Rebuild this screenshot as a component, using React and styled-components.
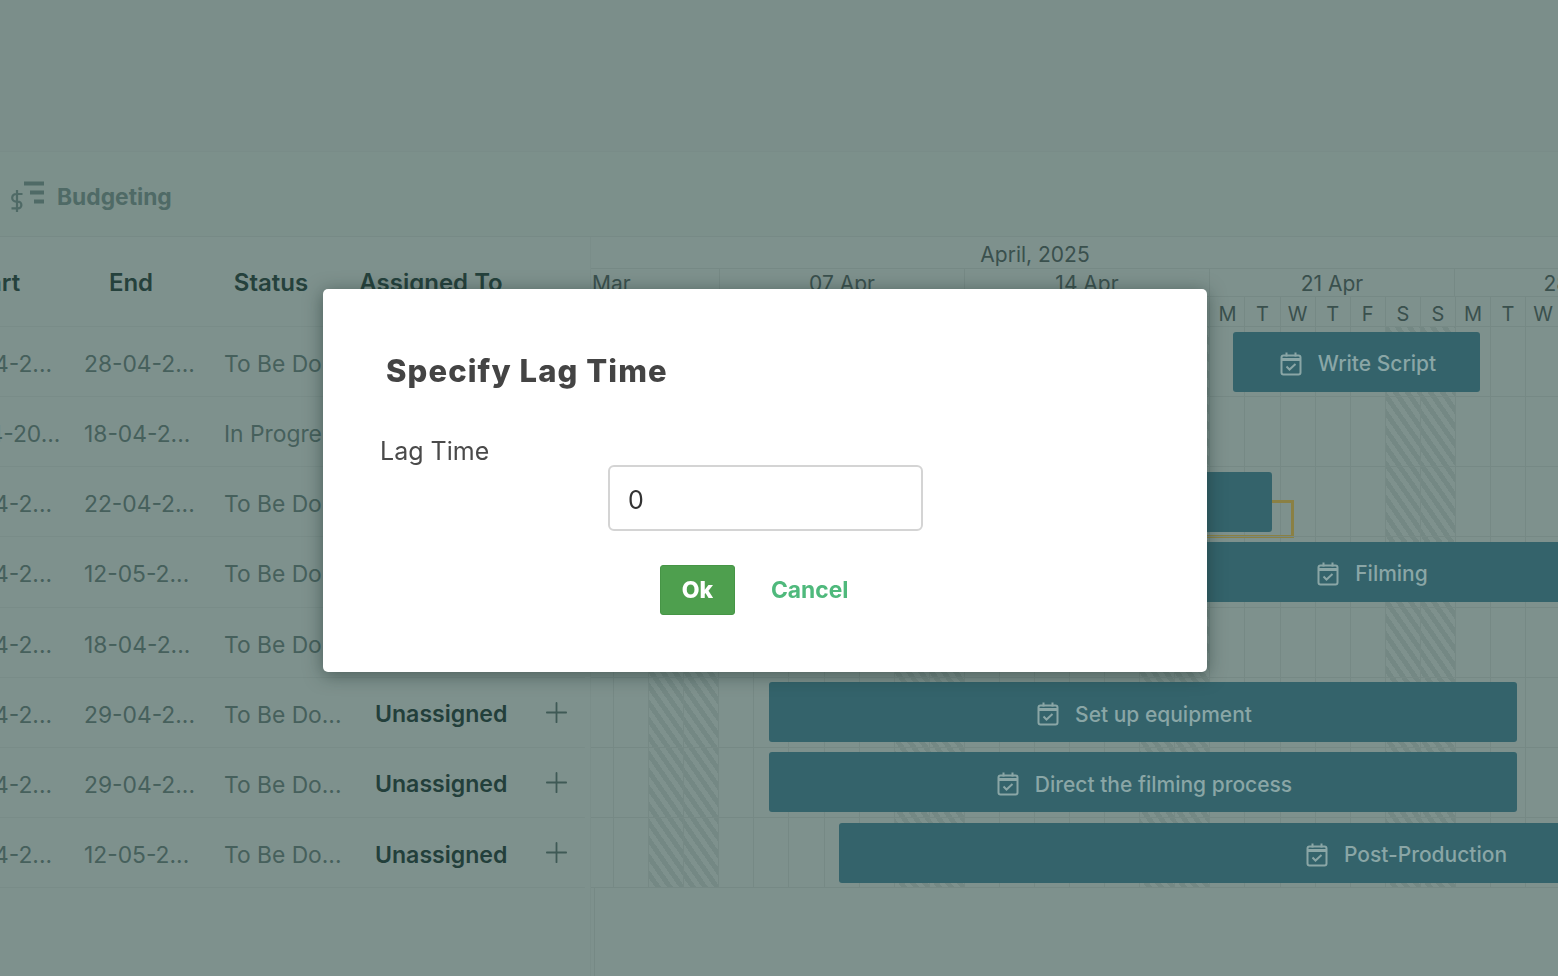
import styled, { createGlobalStyle } from "styled-components";
import { Plus } from "lucide-react";

const GlobalStyle = createGlobalStyle`
  html, body {
    margin: 0;
    padding: 0;
    height: 100%;
    overflow: hidden;
    background: #7e918d;
  }
  * { box-sizing: border-box; }
  body { font-family: Inter, "Liberation Sans", sans-serif; }
`;

const Page = styled.div`
  width: 1558px;
  height: 976px;
  overflow: hidden;
  color: #46605c;
  background: #7e918d;
`;

const TopBand = styled.div`
  height: 152px;
  background: #7b8e8a;
  border-bottom: 1px solid #798c88;
`;

const Toolbar = styled.div`
  height: 85px;
  padding: 5px 0 0 10px;
  display: flex;
  align-items: center;
  gap: 13px;
  color: #4f6a66;
  font-size: 22.8px;
  font-weight: 700;
  background: #7c908b;
  border-bottom: 1px solid #778a86;
`;

const Workspace = styled.div`
  display: flex;
  height: 739px;
`;

/* ---- table ---- */

const TablePanel = styled.div`
  width: 590px;
  flex: none;
  overflow: hidden;
`;

const TableRow = styled.div`
  height: ${(p) => p.$height}px;
  width: 659px;
  margin-left: -74px;
  display: grid;
  grid-template-columns: 144px 140px 140px 180px 52px;
  align-items: center;
  border-bottom: 1px solid #798c88;
`;

const HeadCell = styled.div`
  padding-right: ${(p) => p.$pad ?? 18}px;
  padding-top: 2px;
  text-align: center;
  font-size: 24px;
  font-weight: 600;
  color: #25413c;
  white-space: nowrap;
`;

const Cell = styled.div`
  padding-left: ${(p) => p.$pad ?? 14}px;
  padding-top: 4px;
  font-size: 22.8px;
  white-space: nowrap;
  overflow: hidden;
`;

const Assignee = styled(Cell)`
  padding-left: 25px;
  font-size: 23.1px;
  font-weight: 600;
  color: #233f3b;
`;

const AddCell = styled.div`
  display: flex;
  justify-content: center;
  color: #3f5a56;
`;

/* ---- gantt ---- */

const GanttPanel = styled.div`
  flex: 1;
  min-width: 0;
  display: flex;
  flex-direction: column;
  overflow: hidden;
  border-left: 1px solid #7a8d89;
`;

const HeaderRow = styled.div`
  display: flex;
  flex: none;
  height: ${(p) => p.$height}px;
  color: #3a504d;
  font-size: 21px;
  border-bottom: 1px solid #768985;
  margin-left: ${(p) => p.$offset ?? 0}px;
`;

const MonthCell = styled.div`
  width: 888px;
  display: flex;
  align-items: flex-end;
  justify-content: center;
  padding-bottom: 1px;
`;

const WeekCell = styled.div`
  width: ${(p) => p.$width}px;
  flex: none;
  display: flex;
  align-items: center;
  justify-content: ${(p) => (p.$left ? "flex-start" : "center")};
  padding-top: 2px;
  padding-left: ${(p) => (p.$left ? "1px" : "0")};
  border-right: 1px solid #768985;
  white-space: nowrap;
`;

const DayCell = styled.div`
  width: 35.09px;
  flex: none;
  display: flex;
  align-items: center;
  justify-content: center;
  font-size: 20px;
  padding-top: 4px;
  border-left: 1px solid #768985;
`;

const GanttBody = styled.div`
  position: relative;
  flex: none;
  height: 561px;
  border-bottom: 1px solid #768985;
`;

const EmptyArea = styled.div`
  flex: 1;
  margin-left: 3px;
  border-left: 1px solid #768985;
`;

const DayColumns = styled.div`
  display: flex;
  height: 100%;
  margin-left: -13px;
`;

const DayColumn = styled.div`
  width: 35.09px;
  flex: none;
  border-left: 1px solid #768985;
  background: ${(p) =>
    p.$weekend
      ? "repeating-linear-gradient(55deg, #7e918d 0 4.9px, #748884 4.9px 9.8px)"
      : "none"};
`;

const BarLayer = styled.div`
  position: absolute;
  inset: 0;
  z-index: 0;
`;

const BarRow = styled.div`
  height: 70.15px;
  display: flex;
  align-items: center;
  border-bottom: 1px solid #768985;
`;

const Bar = styled.div`
  position: relative;
  flex: none;
  height: 60px;
  margin-left: ${(p) => p.$x - 591}px;
  width: ${(p) => p.$w}px;
  display: flex;
  align-items: center;
  justify-content: center;
  gap: 16px;
  padding-left: 3px;
  padding-top: 4px;
  background: #34636b;
  border-radius: 3px;
  color: #8aa6a6;
  font-size: 21px;
  font-weight: 500;
  white-space: nowrap;
`;

const Baseline = styled.div`
  position: absolute;
  right: -22px;
  bottom: -6px;
  width: 200px;
  height: 38px;
  border: 3px solid #8a8044;
  z-index: -1;
`;

/* ---- modal ---- */

const Overlay = styled.div`
  position: fixed;
  inset: 0;
  z-index: 10;
  padding: 289px 0 0 323px;
`;

const Modal = styled.div`
  width: 884px;
  height: 383px;
  padding-top: 62px;
  background: #fff;
  border-radius: 5px;
  box-shadow: 0 3px 18px rgba(20, 40, 36, 0.5);
  color: #444;
`;

const Title = styled.h2`
  margin: 0 0 45px 63px;
  font-size: 31px;
  line-height: 40px;
  font-weight: 800;
  letter-spacing: 1.1px;
  color: #444;
`;

const Field = styled.div`
  display: grid;
  grid-template-columns: 228px 315px;
  grid-template-rows: 29px 66px;
  margin-left: 57px;
`;

const Label = styled.label`
  grid-column: 1;
  grid-row: 1;
  font-size: 25px;
  line-height: 30px;
  white-space: nowrap;
  color: #4a4a4a;
`;

const Input = styled.input`
  grid-column: 2;
  grid-row: 2;
  width: 100%;
  height: 66px;
  padding: 3px 18px 0;
  border: 2px solid #d4d4d4;
  border-radius: 6px;
  font-family: inherit;
  font-size: 25px;
  color: #333;
  outline: none;
`;

const Actions = styled.div`
  margin-top: 34px;
  padding-left: 337px;
  display: flex;
  gap: 14px;
`;

const OkButton = styled.button`
  width: 75px;
  height: 50px;
  background: #4e9f4e;
  border: 1px solid #469546;
  border-radius: 3px;
  color: #fff;
  font-family: inherit;
  font-size: 23px;
  font-weight: 800;
`;

const CancelButton = styled.button`
  height: 50px;
  padding: 0 22px 2px;
  background: none;
  border: none;
  color: #4fb97c;
  font-family: inherit;
  font-size: 22.8px;
  font-weight: 700;
`;

function BudgetIcon() {
  return (
    <svg width="34" height="32" viewBox="0 0 34 32" fill="none" stroke="#4f6a66">
      <path d="M14 2.5h20M20 11.5h14M24 20.5h10" strokeWidth="3.8" />
      <path
        d="M7 9v22M12.5 13H6a3.4 3.4 0 0 0 0 7.6h2a3.4 3.4 0 0 1 0 6.8H1.5"
        strokeWidth="2.2"
      />
    </svg>
  );
}

function TaskIcon() {
  return (
    <svg width="22" height="24" viewBox="0 0 22 24" fill="none" stroke="#8aa6a6" strokeWidth="2">
      <rect x="1.5" y="3.5" width="19" height="19" rx="2" />
      <path d="M1.5 7.5h19" strokeWidth="3" />
      <path d="M6.5 0.5v4M15.5 0.5v4" />
      <path d="M6.5 14.5l3 3 6-5.5" />
    </svg>
  );
}

const rows = [
  ["04-04-2...", "28-04-2...", "To Be Do..."],
  ["01-04-20...", "18-04-2...", "In Progre..."],
  ["04-04-2...", "22-04-2...", "To Be Do..."],
  ["04-04-2...", "12-05-2...", "To Be Do..."],
  ["04-04-2...", "18-04-2...", "To Be Do..."],
  ["04-04-2...", "29-04-2...", "To Be Do..."],
  ["04-04-2...", "29-04-2...", "To Be Do..."],
  ["04-04-2...", "12-05-2...", "To Be Do..."],
];

const letters = ["M", "T", "W", "T", "F", "S", "S"];
// the visible timeline opens on a Thursday
const days = Array.from({ length: 29 }, (_, i) => (i + 3) % 7);

const bars = [
  { x: 1233, w: 247, label: "Write Script" },
  null,
  { x: 1000, w: 272, baseline: true },
  { x: 769, w: 1204, label: "Filming" },
  { x: 805, w: 327 },
  { x: 769, w: 748, label: "Set up equipment" },
  { x: 769, w: 748, label: "Direct the filming process" },
  { x: 839, w: 1132, label: "Post-Production" },
];

function App() {
  return (
    <Page>
      <GlobalStyle />
      <TopBand />
      <Toolbar>
        <BudgetIcon />
        Budgeting
      </Toolbar>
      <Workspace>
        <TablePanel>
          <TableRow $height={90}>
            <HeadCell $pad={12}>Start</HeadCell>
            <HeadCell>End</HeadCell>
            <HeadCell>Status</HeadCell>
            <HeadCell>Assigned To</HeadCell>
            <div />
          </TableRow>
          {rows.map((r, i) => (
            <TableRow key={i} $height={70.15}>
              <Cell>{r[0]}</Cell>
              <Cell>{r[1]}</Cell>
              <Cell>{r[2]}</Cell>
              <Assignee>Unassigned</Assignee>
              <AddCell>
                <Plus size={33} strokeWidth={1.3} />
              </AddCell>
            </TableRow>
          ))}
        </TablePanel>
        <GanttPanel>
          <HeaderRow $height={32}>
            <MonthCell>April, 2025</MonthCell>
          </HeaderRow>
          <HeaderRow $height={28}>
            <WeekCell $width={129} $left>
              Mar
            </WeekCell>
            <WeekCell $width={245}>07 Apr</WeekCell>
            <WeekCell $width={245}>14 Apr</WeekCell>
            <WeekCell $width={245}>21 Apr</WeekCell>
            <WeekCell $width={245}>28 Apr</WeekCell>
          </HeaderRow>
          <HeaderRow $height={30} $offset={-13}>
            {days.map((d, i) => (
              <DayCell key={i}>{letters[d]}</DayCell>
            ))}
          </HeaderRow>
          <GanttBody>
            <DayColumns>
              {days.map((d, i) => (
                <DayColumn key={i} $weekend={d >= 5} />
              ))}
            </DayColumns>
            <BarLayer>
              {bars.map((b, i) => (
                <BarRow key={i}>
                  {b && (
                    <Bar $x={b.x} $w={b.w}>
                      {b.baseline && <Baseline />}
                      {b.label && <TaskIcon />}
                      {b.label}
                    </Bar>
                  )}
                </BarRow>
              ))}
            </BarLayer>
          </GanttBody>
          <EmptyArea />
        </GanttPanel>
      </Workspace>
      <Overlay>
        <Modal>
          <Title>Specify Lag Time</Title>
          <Field>
            <Label>Lag Time</Label>
            <Input defaultValue="0" />
          </Field>
          <Actions>
            <OkButton>Ok</OkButton>
            <CancelButton>Cancel</CancelButton>
          </Actions>
        </Modal>
      </Overlay>
    </Page>
  );
}

export default App;
